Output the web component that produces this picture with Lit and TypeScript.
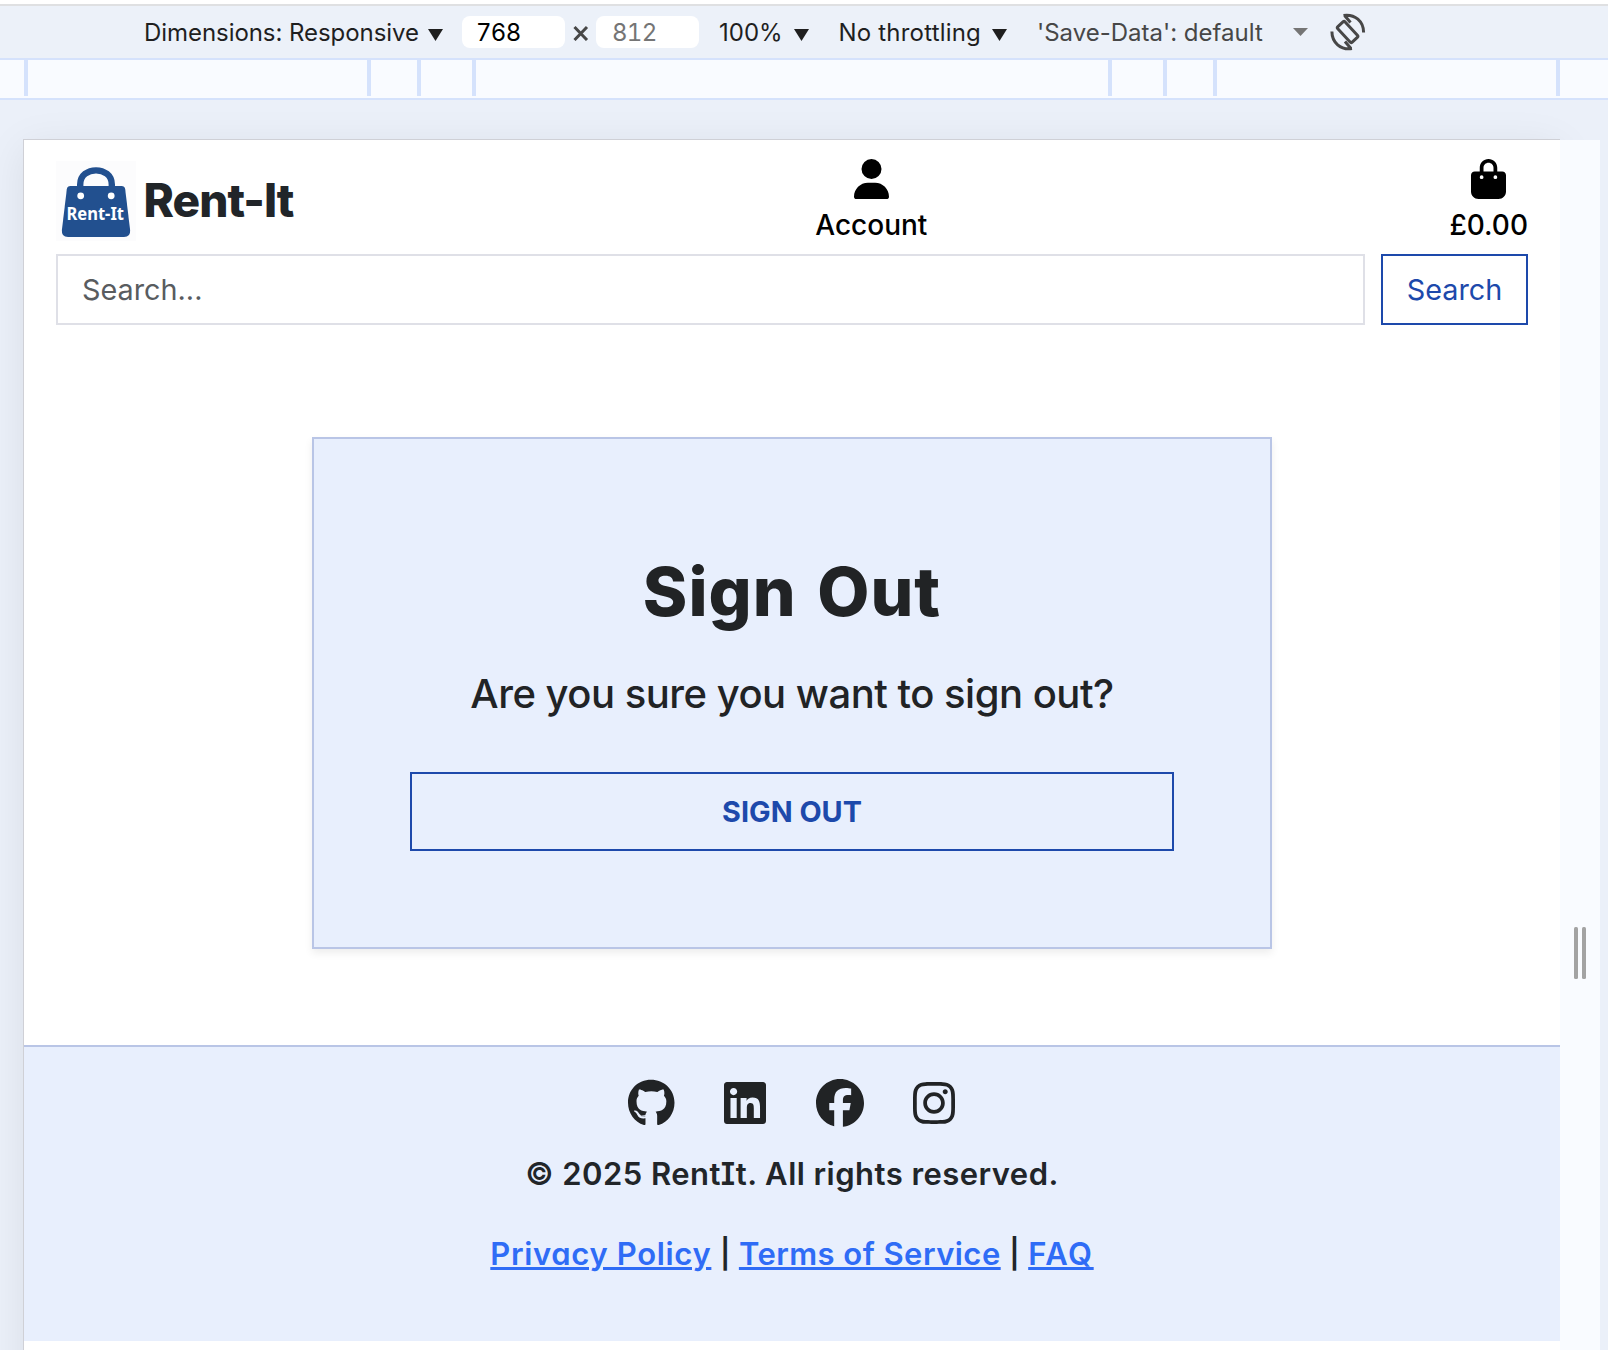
import { LitElement, html, svg, css } from "lit";
import { customElement } from "lit/decorators.js";

const RULER_GAPS = [339, 46, 51, 632, 51, 46, 339];

const SOCIAL = [
  {
    name: "GitHub",
    w: 496,
    d: "M165.9 397.4c0 2-2.3 3.6-5.2 3.6-3.3.3-5.6-1.3-5.6-3.6 0-2 2.3-3.6 5.2-3.6 3-.3 5.6 1.3 5.6 3.6zm-31.1-4.5c-.7 2 1.3 4.3 4.3 4.9 2.6 1 5.6 0 6.2-2s-1.3-4.3-4.3-5.2c-2.6-.7-5.5.3-6.2 2.3zm44.2-1.7c-2.9.7-4.9 2.6-4.6 4.9.3 2 2.9 3.3 5.9 2.6 2.9-.7 4.9-2.6 4.6-4.6-.3-1.9-3-3.2-5.9-2.9zM244.8 8C106.1 8 0 113.3 0 252c0 110.9 69.8 205.8 169.5 239.2 12.8 2.3 17.3-5.6 17.3-12.1 0-6.2-.3-40.4-.3-61.4 0 0-70 15-84.7-29.8 0 0-11.4-29.1-27.8-36.6 0 0-22.9-15.7 1.6-15.4 0 0 24.9 2 38.6 25.8 21.9 38.6 58.6 27.5 72.9 20.9 2.3-16 8.8-27.1 16-33.7-55.9-6.2-112.3-14.3-112.3-110.5 0-27.5 7.6-41.3 23.6-58.9-2.6-6.5-11.1-33.3 2.6-67.9 20.9-6.5 69 27 69 27 20-5.6 41.5-8.5 62.8-8.5s42.8 2.9 62.8 8.5c0 0 48.1-33.6 69-27 13.7 34.7 5.2 61.4 2.6 67.9 16 17.7 25.8 31.5 25.8 58.9 0 96.5-58.9 104.2-114.8 110.5 9.2 7.9 17 22.9 17 46.4 0 33.7-.3 75.4-.3 83.6 0 6.5 4.6 14.4 17.3 12.1C428.2 457.8 496 362.9 496 252 496 113.3 383.5 8 244.8 8z",
  },
  {
    name: "LinkedIn",
    w: 448,
    d: "M416 32H31.9C14.3 32 0 46.5 0 64.3v383.4C0 465.5 14.3 480 31.9 480H416c17.6 0 32-14.5 32-32.3V64.3c0-17.8-14.4-32.3-32-32.3zM135.4 416H69V202.2h66.5V416zm-33.2-243c-21.3 0-38.5-17.3-38.5-38.5S80.9 96 102.2 96c21.2 0 38.5 17.3 38.5 38.5 0 21.3-17.2 38.5-38.5 38.5zm282.1 243h-66.4V312c0-24.8-.5-56.7-34.5-56.7-34.6 0-39.9 27-39.9 54.9V416h-66.4V202.2h63.7v29.2h.9c8.9-16.8 30.6-34.5 62.9-34.5 67.2 0 79.7 44.3 79.7 101.9V416z",
  },
  {
    name: "Facebook",
    w: 512,
    d: "M512 256C512 114.6 397.4 0 256 0S0 114.6 0 256C0 376 82.7 476.8 194.2 504.5V334.2H141.4V256h52.8V222.3c0-87.1 39.4-127.5 125-127.5c16.2 0 44.2 3.2 55.7 6.4V172c-6-.6-16.5-1-29.6-1c-42 0-58.2 15.9-58.2 57.2V256h83.6l-14.4 78.2H287V510.1C413.8 494.8 512 386.9 512 256h0z",
  },
  {
    name: "Instagram",
    w: 448,
    d: "M224.1 141c-63.6 0-114.9 51.3-114.9 114.9s51.3 114.9 114.9 114.9S339 319.5 339 255.9 287.7 141 224.1 141zm0 189.6c-41.1 0-74.7-33.5-74.7-74.7s33.5-74.7 74.7-74.7 74.7 33.5 74.7 74.7-33.6 74.7-74.7 74.7zm146.4-194.3c0 14.9-12 26.8-26.8 26.8-14.9 0-26.8-12-26.8-26.8s12-26.8 26.8-26.8 26.8 12 26.8 26.8zm76.1 27.2c-1.7-35.9-9.9-67.7-36.2-93.9-26.2-26.2-58-34.4-93.9-36.2-37-2.1-147.9-2.1-184.9 0-35.8 1.7-67.6 9.9-93.9 36.1s-34.4 58-36.2 93.9c-2.1 37-2.1 147.9 0 184.9 1.7 35.9 9.9 67.7 36.2 93.9s58 34.4 93.9 36.2c37 2.1 147.9 2.1 184.9 0 35.9-1.7 67.7-9.9 93.9-36.2 26.2-26.2 34.4-58 36.2-93.9 2.1-37 2.1-147.8 0-184.8zM398.800 388c-7.800 19.600-22.900 34.700-42.600 42.600-29.500 11.700-99.500 9-132.100 9s-102.700 2.600-132.100-9c-19.600-7.800-34.700-22.900-42.600-42.600-11.700-29.500-9-99.500-9-132.100s-2.600-102.700 9-132.100c7.800-19.600 22.900-34.700 42.600-42.600 29.500-11.700 99.500-9 132.100-9s102.700-2.600 132.100 9c19.600 7.800 34.700 22.900 42.600 42.600 11.700 29.500 9 99.500 9 132.100s2.700 102.700-9 132.100z",
  },
];

const caret = (cls: string, h: number) =>
  html`<svg class=${cls} width="15" height=${h} viewBox="0 0 15 12" preserveAspectRatio="none"><path d="M0 0H15L7.5 12Z" fill="currentColor" /></svg>`;

@customElement("device-toolbar")
class DeviceToolbar extends LitElement {
  static styles = css`
    :host { display: block; }
    .bar {
      box-sizing: border-box; height: 56px; margin-top: 4px; padding-left: 143px;
      border-top: 2px solid #dfe0e2; border-bottom: 2px solid #d5e2fc;
      background: #ecf1f9; color: #1f1f1f;
      font: 400 24px/32px Inter, "Liberation Sans", sans-serif;
      display: grid; align-items: center; white-space: nowrap;
      grid-template-columns: 285px 34px 103px 31px 103px 95px 43.5px 154.5px 45px 256px 37px 36px;
    }
    .label { padding-top: 2px; letter-spacing: -0.06px; }
    .dimensions { padding-left: 1px; }
    .field {
      box-sizing: border-box; height: 32px; border-radius: 8px; background: #fff; color: #000;
      line-height: 30px; padding: 2px 0 0 14px; font-feature-settings: "tnum"; letter-spacing: -0.7px;
    }
    .muted { color: #757575; padding-left: 16px; }
    .times { margin: 2px 0 0 8px; }
    .zoom { padding-left: 20px; letter-spacing: 0; }
    .throttle { padding-left: 1px; letter-spacing: 0.2px; }
    .save { color: #474747; letter-spacing: 0; }
    .arrow { margin-top: 6px; }
    .arrow-muted { color: #757575; }
    svg { display: block; }
    .ruler {
      height: 38px; background: #f9fbff; border-bottom: 2px solid #d5e2fc;
      padding-left: 24px; display: flex;
    }
    .tick { width: 4px; height: 36px; background: #d5e2fc; flex: none; }
    .gap { flex: none; }
  `;
  render() {
    return html`
      <div class="bar">
        <span class="label dimensions">Dimensions: Responsive</span>${caret("arrow", 12)}
        <span class="field">768</span>
        <svg class="times" width="16" height="16" viewBox="0 0 16 16"><path d="M1.5 2L14 15M14 2L1.5 15" stroke="#474747" stroke-width="3" fill="none" /></svg>
        <span class="field muted">812</span>
        <span class="label zoom">100%</span>${caret("arrow", 12)}
        <span class="label throttle">No throttling</span>${caret("arrow", 12)}
        <span class="label save">'Save-Data': default</span>${caret("arrow-muted", 8)}
        <svg width="36" height="38" viewBox="0 0 36 38" fill="none" stroke="#474747" stroke-width="3">
          <rect x="12.6" y="8.5" width="10" height="21" rx="1.5" transform="rotate(-43 17.6 19)" />
          <path d="M13.5 2.4C25 0.8 33.6 8.5 33.6 19.5M15 3L20.5 9.5" />
          <path d="M22 35.6C10.5 37.2 1.9 29.5 1.9 18.5M20.5 35L15 28.5" />
        </svg>
      </div>
      <div class="ruler">
        <i class="tick"></i>${RULER_GAPS.map((g) => html`<i class="gap" style="width:${g}px"></i><i class="tick"></i>`)}
      </div>
    `;
  }
}

@customElement("shop-header")
class ShopHeader extends LitElement {
  static styles = css`
    :host { display: block; padding: 16px 32px 0; font-family: Inter, "Liberation Sans", sans-serif; }
    svg { display: block; }
    .top { display: flex; justify-content: space-between; align-items: center; padding-bottom: 8px; height: 90px; }
    .brand { display: flex; align-items: center; gap: 7.6px; color: #212529; font-weight: 800; font-size: 46px; line-height: 80px; letter-spacing: -1px; }
    .name { padding-bottom: 2px; }
    .tag { font: 700 17.6px "Noto Sans", "Open Sans", sans-serif; letter-spacing: 0; }
    .item { display: flex; flex-direction: column; align-items: center; padding-top: 3px; color: #000; font-weight: 500; font-size: 28px; line-height: 42px; }
    .item svg { margin-bottom: 5px; }
    .search { display: flex; gap: 16px; }
    .input { flex: 1; height: 67px; border: 2px solid #dfe0e7; padding-left: 24px; font-size: 28.8px; line-height: 67px; color: #595c5f; }
    .btn { width: 143px; height: 67px; border: 2px solid #1d49ab; color: #1d49ab; font-size: 28.8px; line-height: 67px; text-align: center; }
  `;
  render() {
    return html`
      <div class="top">
        <div class="brand">
          <svg width="80" height="80" viewBox="0 0 80 80">
            <rect width="80" height="80" fill="#fcfcfd" />
            <path d="M24.2 28V23.5C24.2 4.6 55.8 4.6 55.8 23.5V28" fill="none" stroke="#22508f" stroke-width="6.4" />
            <path d="M14.5 25H65.5Q68.7 25 69.2 28.2L74.1 69Q74.7 76 68 76H12Q5.3 76 5.9 69L10.8 28.2Q11.3 25 14.5 25Z" fill="#22508f" />
            <circle cx="24.7" cy="34.8" r="3.4" fill="#fff" /><circle cx="55.2" cy="34.8" r="3.4" fill="#fff" />
            <text class="tag" x="10.5" y="59.3" textLength="57.5" lengthAdjust="spacingAndGlyphs" fill="#fff">Rent-It</text>
          </svg>
          <span class="name">Rent-It</span>
        </div>
        <div class="item">
          <svg width="35" height="40" viewBox="0 0 448 512"><path d="M224 256A128 128 0 1 0 224 0a128 128 0 1 0 0 256zm-45.7 48C79.8 304 0 383.8 0 482.3C0 498.7 13.3 512 29.7 512H418.3c16.4 0 29.7-13.3 29.7-29.7C448 383.8 368.2 304 269.7 304H178.3z" /></svg>
          <span>Account</span>
        </div>
        <div class="item">
          <svg width="35" height="40" viewBox="0 0 448 512"><path d="M160 112c0-35.3 28.7-64 64-64s64 28.7 64 64v48H160V112zm-48 48H48c-26.5 0-48 21.5-48 48V416c0 53 43 96 96 96H352c53 0 96-43 96-96V208c0-26.5-21.5-48-48-48H336V112C336 50.1 285.9 0 224 0S112 50.1 112 112v48zm24 48a24 24 0 1 1 0 48 24 24 0 1 1 0-48zm152 24a24 24 0 1 1 48 0 24 24 0 1 1 -48 0z" /></svg>
          <span>£0.00</span>
        </div>
      </div>
      <div class="search">
        <div class="input">Search...</div>
        <div class="btn">Search</div>
      </div>
    `;
  }
}

@customElement("sign-out-card")
class SignOutCard extends LitElement {
  static styles = css`
    :host {
      display: block; box-sizing: border-box; width: 960px; height: 512px; margin: 112px auto 96px;
      padding: 112px 96px 96px; border: 2px solid #b9c5e6; background: #e8effd;
      box-shadow: 0 4px 8px rgba(0, 0, 0, 0.075); text-align: center; color: #212325;
      font-family: Inter, "Liberation Sans", sans-serif;
    }
    h1 { margin: 0; font-size: 67.5px; font-weight: 800; line-height: 82px; letter-spacing: 1px; word-spacing: 5px; }
    p { margin: 37px 0 54px; font-size: 40px; font-weight: 500; line-height: 48px; letter-spacing: -0.5px; }
    .btn { height: 75px; border: 2px solid #1d49ab; color: #1d49ab; font-size: 28.8px; font-weight: 700; line-height: 75px; }
  `;
  render() {
    return html`<h1>Sign Out</h1><p>Are you sure you want to sign out?</p><div class="btn">SIGN OUT</div>`;
  }
}

@customElement("shop-footer")
class ShopFooter extends LitElement {
  static styles = css`
    :host {
      display: block; box-sizing: border-box; height: 296px; padding-top: 32px;
      border-top: 2px solid #b9c5e6; background: #e8effd; color: #212529; text-align: center;
      font: 600 31px/48px Inter, "Liberation Sans", sans-serif;
      font-feature-settings: "cv11"; letter-spacing: 0.46px;
    }
    .social { display: flex; justify-content: center; gap: 49.5px; height: 48px; padding-right: 1px; color: #212325; }
    svg { display: block; }
    .copy { margin-top: 23px; }
    .serif-i { font-feature-settings: "cv11", "cv08"; }
    .links { margin-top: 32px; display: flex; justify-content: center; }
    .sep { width: 27.5px; letter-spacing: 0; font-size: 29px; }
    a { color: #2f6cf6; text-decoration: underline; text-decoration-thickness: 3px; text-underline-offset: 2px; white-space: nowrap; }
    .privacy { letter-spacing: 0.66px; }
    .terms { letter-spacing: 0.46px; }
    .faq { letter-spacing: 1.6px; }
  `;
  render() {
    return html`
      <div class="social">
        ${SOCIAL.map((s) => html`<svg role="img" aria-label=${s.name} width=${(s.w * 48) / 512} height="48" viewBox="0 0 ${s.w} 512">${svg`<path fill="currentColor" d=${s.d} />`}</svg>`)}
      </div>
      <div class="copy">© 2025 Rent<span class="serif-i">I</span>t. All rights reserved.</div>
      <div class="links">
        <a class="privacy">Privacy Policy</a><span class="sep">|</span><a class="terms">Terms of Service</a><span class="sep">|</span><a class="faq">FAQ</a>
      </div>
    `;
  }
}

@customElement("app-root")
class AppRoot extends LitElement {
  static styles = css`
    :host { display: flex; flex-direction: column; width: 1608px; height: 1350px; overflow: hidden; background: #fff; }
    .stage { flex: 1; min-height: 0; display: flex; padding: 39px 0 0 23px; background: #ebf0f9; overflow: hidden; }
    .device { flex: none; width: 1536px; height: 1300px; border: 1px solid #cfd0d6; border-right: 0; background: #fff; box-shadow: 0 8px 40px rgba(0, 0, 0, 0.08); }
    .resizer { flex: none; width: 40px; height: 1300px; margin-top: 1px; background: #f9fbff; display: flex; justify-content: center; gap: 4px; position: relative; }
    .grip { width: 4px; height: 52px; margin-top: 787px; border-radius: 1.5px; background: #a3a3a3; }
  `;
  render() {
    return html`
      <device-toolbar></device-toolbar>
      <div class="stage">
        <div class="device">
          <shop-header></shop-header>
          <sign-out-card></sign-out-card>
          <shop-footer></shop-footer>
        </div>
        <div class="resizer"><i class="grip"></i><i class="grip"></i></div>
      </div>
    `;
  }
}
